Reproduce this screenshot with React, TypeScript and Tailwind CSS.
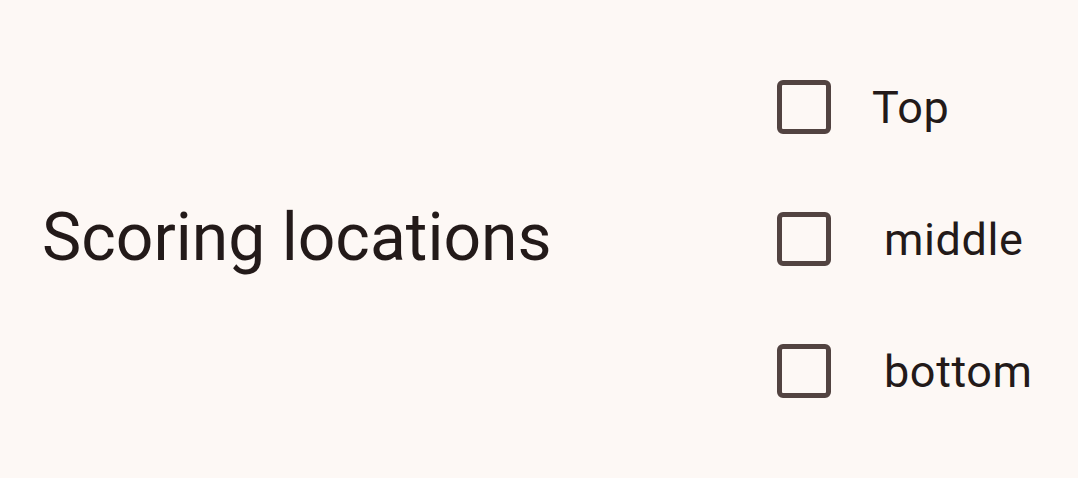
import React from "react";

function Box() {
  return <div className="w-[54px] h-[54px] rounded-[6px] border-[5px] border-[#524341] shrink-0" />;
}

export default function App() {
  const items = [
    { label: "Top", ml: "ml-[41px]" },
    { label: "middle", ml: "ml-[53px]" },
    { label: "bottom", ml: "ml-[53px]" },
  ];
  return (
    <div className="w-[1078px] h-[478px] bg-[#fdf8f5] flex items-center text-[#231a19]" style={{ fontFamily: "Roboto, sans-serif" }}>
      <div className="pl-[42px] text-[66px] leading-none flex-1 -mt-[2px]">Scoring locations</div>
      <div className="flex flex-col w-[301px]">
        {items.map((it) => (
          <div key={it.label} className="h-[132px] flex items-center">
            <Box />
            <span className={`${it.ml} text-[45px] leading-none tracking-[0.6px]`}>{it.label}</span>
          </div>
        ))}
      </div>
    </div>
  );
}
